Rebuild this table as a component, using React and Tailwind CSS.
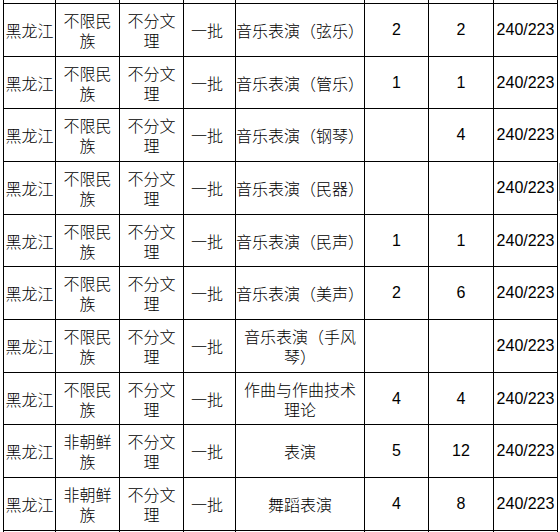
const widths = ["w-[52px]", "w-[64px]", "w-[64px]", "w-[52px]", "w-[129px]", "w-[64px]", "w-[65px]", "w-[64px]"];

const rows = [
  { h: 53, eth: "不限民\n族", major: "音乐表演（弦乐）", a: "2", b: "2" },
  { h: 52, eth: "不限民\n族", major: "音乐表演（管乐）", a: "1", b: "1" },
  { h: 53, eth: "不限民\n族", major: "音乐表演（钢琴）", a: "", b: "4" },
  { h: 53, eth: "不限民\n族", major: "音乐表演（民器）", a: "", b: "" },
  { h: 52, eth: "不限民\n族", major: "音乐表演（民声）", a: "1", b: "1" },
  { h: 53, eth: "不限民\n族", major: "音乐表演（美声）", a: "2", b: "6" },
  { h: 53, eth: "不限民\n族", major: "音乐表演（手风\n琴）", center: true, a: "", b: "" },
  { h: 52, eth: "不限民\n族", major: "作曲与作曲技术\n理论", center: true, a: "4", b: "4" },
  { h: 53, eth: "非朝鲜\n族", major: "表演", center: true, a: "5", b: "12" },
  { h: 53, eth: "非朝鲜\n族", major: "舞蹈表演", center: true, a: "4", b: "8" },
];

const cjk = { fontFamily: '"Noto Sans CJK SC", sans-serif' };
const latin = { fontFamily: '"Liberation Sans", Arial, sans-serif' };

// stub row: only the vertical rules of the rows cut off above / below
const Stub = ({ className }) => (
  <div className={`flex ${className}`}>
    {widths.map((w, i) => (
      <div key={i} className={`${w} shrink-0 border-r border-black`} />
    ))}
  </div>
);

export default function App() {
  return (
    <div className="relative h-[532px] w-[560px] overflow-hidden bg-white text-[16px] text-black">
      <div className="ml-[3px] w-fit border-l border-black">
        <Stub className="h-[4px] border-b border-black" />
        {rows.map((r, i) => (
          <div
            key={i}
            className={`flex border-b border-black ${r.h === 53 ? "h-[53px]" : "h-[52px]"}`}
          >
            <div style={cjk} className="flex w-[52px] shrink-0 items-center justify-center border-r border-black font-light whitespace-nowrap">
              黑龙江
            </div>
            <div style={cjk} className="flex w-[64px] shrink-0 items-center justify-center border-r border-black text-center font-light leading-[20px] whitespace-pre-line">
              {r.eth}
            </div>
            <div style={cjk} className="flex w-[64px] shrink-0 items-center justify-center border-r border-black text-center font-light leading-[20px] whitespace-pre-line">
              {"不分文\n理"}
            </div>
            <div style={cjk} className="flex w-[52px] shrink-0 items-center justify-center border-r border-black pr-[5px] font-light whitespace-nowrap">
              一批
            </div>
            <div
              style={cjk}
              className={`flex w-[129px] shrink-0 items-center border-r border-black font-light leading-[20px] whitespace-pre-line ${
                r.center ? "justify-center text-center" : "justify-start"
              }`}
            >
              {r.major}
            </div>
            <div style={latin} className="flex w-[64px] shrink-0 items-center justify-center border-r border-black">
              {r.a}
            </div>
            <div style={latin} className="flex w-[65px] shrink-0 items-center justify-center border-r border-black">
              {r.b}
            </div>
            <div style={latin} className="flex w-[64px] shrink-0 items-center justify-center border-r border-black whitespace-nowrap">
              240/223
            </div>
          </div>
        ))}
        <Stub className="h-[4px]" />
      </div>
      {/* faint caret mark at the right edge */}
      <div className="absolute left-[559px] top-[163px] h-[38px] w-px bg-[#9a9a9a]" />
    </div>
  );
}
